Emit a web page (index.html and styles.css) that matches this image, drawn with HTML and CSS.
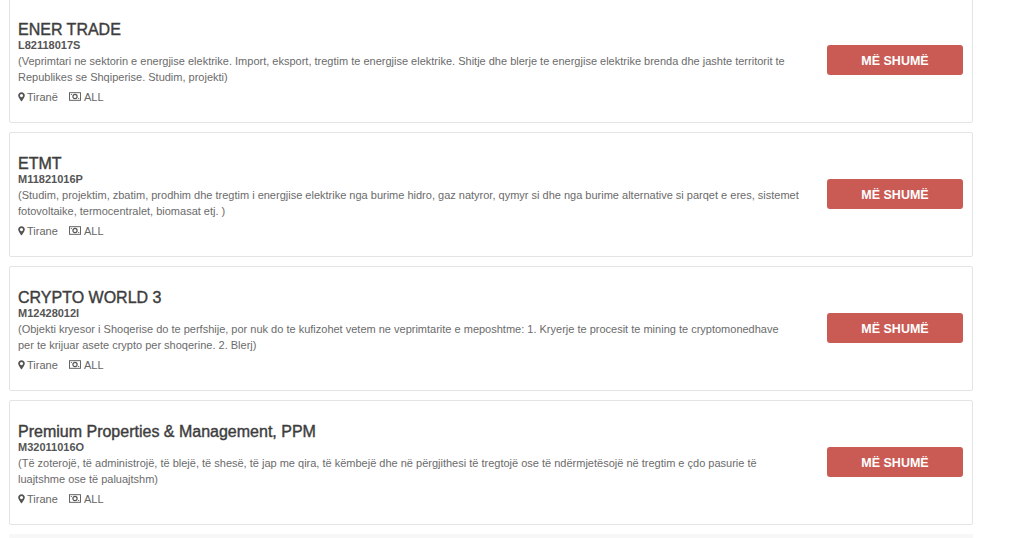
FILE: index.html
```html
<html>
	<head>
		<meta charset="utf-8" />
		<title>Kompani</title>
		<link rel="stylesheet" href="styles.css">
	</head>
	<body>
		<svg class="defs" width="0" height="0">
			<symbol id="pin" viewBox="0 0 8 11"><path fill-rule="evenodd" d="M4 0.2C1.8 0.2 0.2 1.8 0.2 3.9 0.2 6.3 4 10.8 4 10.8S7.8 6.3 7.8 3.9C7.8 1.8 6.2 0.2 4 0.2ZM4 2.1A1.8 1.8 0 1 1 4 5.7 1.8 1.8 0 0 1 4 2.1Z"/></symbol>
			<symbol id="money" viewBox="0 0 12 9"><rect x="0.5" y="0.7" width="11" height="7.6" fill="none" stroke="currentColor" stroke-width="0.9"/><circle cx="6" cy="4.5" r="2.1" fill="none" stroke="currentColor" stroke-width="1.2"/><rect x="1.8" y="2" width="1" height="1"/><rect x="9.2" y="6" width="1" height="1"/></symbol>
		</svg>
		<div class="list">
			<div class="card">
				<div class="info">
					<h3>ENER TRADE</h3>
					<div class="nipt">L82118017S</div>
					<p>(Veprimtari ne sektorin e energjise elektrike. Import, eksport, tregtim te energjise elektrike. Shitje dhe blerje te energjise elektrike brenda dhe jashte territorit te Republikes se Shqiperise. Studim, projekti)</p>
					<div class="meta">
						<span class="place"><svg class="ic_pin"><use href="#pin"/></svg>Tiranë</span>
						<span><svg class="ic_money"><use href="#money"/></svg>ALL</span>
					</div>
				</div>
				<a class="btn">MË SHUMË</a>
			</div>
			<div class="card">
				<div class="info">
					<h3>ETMT</h3>
					<div class="nipt">M11821016P</div>
					<p>(Studim, projektim, zbatim, prodhim dhe tregtim i energjise elektrike nga burime hidro, gaz natyror, qymyr si dhe nga burime alternative si parqet e eres, sistemet fotovoltaike, termocentralet, biomasat etj. )</p>
					<div class="meta">
						<span class="place"><svg class="ic_pin"><use href="#pin"/></svg>Tirane</span>
						<span><svg class="ic_money"><use href="#money"/></svg>ALL</span>
					</div>
				</div>
				<a class="btn">MË SHUMË</a>
			</div>
			<div class="card">
				<div class="info">
					<h3>CRYPTO WORLD 3</h3>
					<div class="nipt">M12428012I</div>
					<p>(Objekti kryesor i Shoqerise do te perfshije, por nuk do te kufizohet vetem ne veprimtarite e meposhtme: 1. Kryerje te procesit te mining te cryptomonedhave<br>per te krijuar asete crypto per shoqerine. 2. Blerj)</p>
					<div class="meta">
						<span class="place"><svg class="ic_pin"><use href="#pin"/></svg>Tirane</span>
						<span><svg class="ic_money"><use href="#money"/></svg>ALL</span>
					</div>
				</div>
				<a class="btn">MË SHUMË</a>
			</div>
			<div class="card">
				<div class="info">
					<h3>Premium Properties &amp; Management, PPM</h3>
					<div class="nipt">M32011016O</div>
					<p>(Të zoterojë, të administrojë, të blejë, të shesë, të jap me qira, të këmbejë dhe në përgjithesi të tregtojë ose të ndërmjetësojë në tregtim e çdo pasurie të luajtshme ose të paluajtshm)</p>
					<div class="meta">
						<span class="place"><svg class="ic_pin"><use href="#pin"/></svg>Tirane</span>
						<span><svg class="ic_money"><use href="#money"/></svg>ALL</span>
					</div>
				</div>
				<a class="btn">MË SHUMË</a>
			</div>
			<div class="card card_next"></div>
		</div>
	</body>
</html>
```

FILE: styles.css
```css
* {margin: 0; padding: 0; box-sizing: border-box;}
html, body {height: 100%; overflow: hidden;}
body {background: #fff; font-family: "Liberation Sans", Arial, sans-serif; color: #666;}
.defs {display: block; height: 0;}
/*list*/
.list {width: 964px; margin: -2px 0 0 9px; display: flex; flex-direction: column; gap: 9px;}
.card {height: 125px; flex: none; display: flex; align-items: center; padding: 2px 10px 0 8px; background: #fff; border: 1px solid #e4e4e4; border-radius: 2px;}
.card_next {height: 4px; padding: 0; background: #f7f7f7; border: 0; border-radius: 0;}
/*text*/
.info {width: 800px; flex: none;}
h3 {font-size: 16px; line-height: 20px; font-weight: normal; color: #3d3d3d; -webkit-text-stroke: 0.4px #3d3d3d;}
.nipt {font-size: 11px; line-height: 13px; font-weight: bold; color: #555; margin-top: -1px;}
p {width: 785px; font-size: 11px; line-height: 16px; color: #6b6b6b; margin-top: 1px;}
.meta {font-size: 11px; line-height: 14px; margin-top: 5px; display: flex; gap: 11px; color: #666;}
.meta span {display: flex; align-items: center;}
.place {min-width: 40px;}
.ic_pin {width: 7px; height: 10px; margin-right: 2px; fill: #555;}
.ic_money {width: 12px; height: 9px; margin-right: 3px; fill: #555; color: #555;}
/*button*/
.btn {width: 136px; height: 30px; margin: -4px 0 0 9px; flex: none; background: #c95b54; border-radius: 3px; color: #fff; font-size: 12.5px; font-weight: bold; text-align: center; line-height: 32px;}
```
